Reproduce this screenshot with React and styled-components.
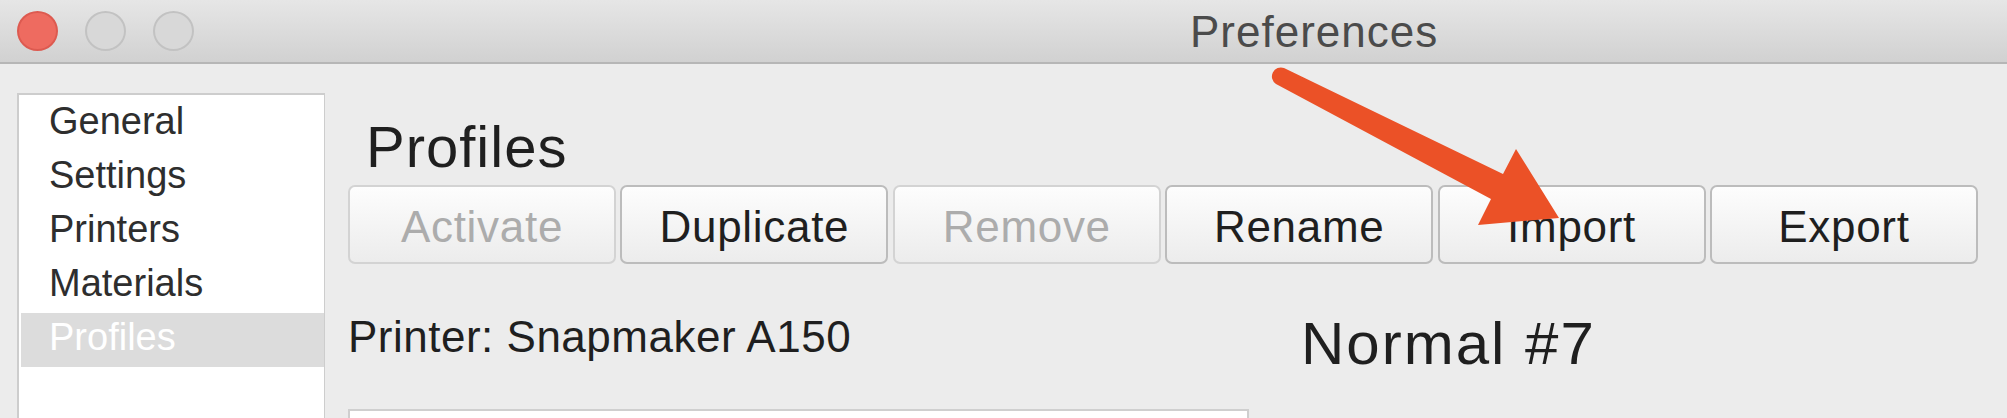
import styled, { createGlobalStyle } from 'styled-components';

const GlobalStyle = createGlobalStyle`
  html, body {
    margin: 0;
    padding: 0;
    height: 100%;
    overflow: hidden;
    background: #ececec;
    font-family: "Liberation Sans", Arial, sans-serif;
  }
`;

const Window = styled.div`
  position: relative;
  width: 2007px;
  height: 418px;
  overflow: hidden;
  background: #ececec;
`;

const TitleBar = styled.div`
  display: flex;
  align-items: center;
  height: 62px;
  padding-left: 17px;
  background: linear-gradient(#e6e6e6, #d1d1d1);
  border-bottom: 2px solid #b6b6b6;
  box-sizing: content-box;
`;

const Lights = styled.div`
  display: flex;
  gap: 27px;
`;

const Light = styled.span`
  width: 41px;
  height: 40px;
  border-radius: 50%;
  box-sizing: border-box;
  background: ${(p) => (p.$red ? '#ee6b60' : '#d8d8d8')};
  border: 2px solid ${(p) => (p.$red ? '#dd5a50' : '#c2c2c2')};
`;

const Title = styled.div`
  margin-left: 996px;
  font-size: 44px;
  line-height: 44px;
  letter-spacing: 1px;
  color: #4b4b4b;
  padding-top: 1px;
`;

const Body = styled.div`
  display: flex;
  padding: 29px 0 0 17px;
`;

const Sidebar = styled.ul`
  list-style: none;
  margin: 0;
  width: 303px;
  height: 400px;
  padding: 2px 0 0 2px;
  background: #fff;
  border: 2px solid #cdcdcd;
  border-right: 1px solid #cdcdcd;
  box-sizing: content-box;
  flex-shrink: 0;
`;

const NavItem = styled.li`
  height: 54px;
  box-sizing: border-box;
  padding: 0 0 6px 28px;
  font-size: 38px;
  line-height: 48px;
  color: ${(p) => (p.$active ? '#fff' : '#2e2e2e')};
  background: ${(p) => (p.$active ? '#dcdcdc' : 'transparent')};
`;

const Content = styled.div`
  display: flex;
  flex-direction: column;
  margin-left: 23px;
  padding-top: 22px;
`;

const Heading = styled.h1`
  margin: 0 0 6px 18px;
  font-size: 58px;
  line-height: 64px;
  letter-spacing: 1px;
  font-weight: 400;
  color: #1f1f1f;
`;

const Toolbar = styled.div`
  display: grid;
  grid-template-columns: repeat(6, 268px);
  column-gap: 4.4px;
`;

const Button = styled.button`
  height: 79px;
  box-sizing: border-box;
  padding: 4px 0 0;
  font-family: inherit;
  font-size: 44px;
  line-height: 71px;
  letter-spacing: 0.7px;
  border-radius: 7px;
  border: 2px solid ${(p) => (p.disabled ? '#d3d3d3' : '#bcbcbc')};
  background: linear-gradient(#fdfdfd, #ececec);
  color: ${(p) => (p.disabled ? '#acacac' : '#1f1f1f')};
  cursor: default;
`;

const DetailRow = styled.div`
  display: flex;
  gap: 52px;
  margin-top: 45px;
`;

const LeftColumn = styled.div`
  display: flex;
  flex-direction: column;
  width: 901px;
  padding-top: 3px;
`;

const Label = styled.div`
  font-size: 44px;
  line-height: 50px;
  letter-spacing: 0.5px;
  color: #1f1f1f;
`;

const ListBox = styled.div`
  margin-top: 47px;
  height: 200px;
  background: #fff;
  border: 2px solid #cfcfcf;
`;

const ProfileName = styled.div`
  font-size: 60px;
  line-height: 70px;
  letter-spacing: 2px;
  color: #1f1f1f;
`;

const ArrowOverlay = styled.svg`
  position: absolute;
  left: 0;
  top: 0;
  pointer-events: none;
`;

const navItems = ['General', 'Settings', 'Printers', 'Materials', 'Profiles'];

const buttons = [
  { label: 'Activate', disabled: true },
  { label: 'Duplicate' },
  { label: 'Remove', disabled: true },
  { label: 'Rename' },
  { label: 'Import' },
  { label: 'Export' },
];

const App = () => {
  return (
    <Window>
      <GlobalStyle />
      <TitleBar>
        <Lights>
          <Light $red />
          <Light />
          <Light />
        </Lights>
        <Title>Preferences</Title>
      </TitleBar>

      <Body>
        <Sidebar>
          {navItems.map((item) => (
            <NavItem key={item} $active={item === 'Profiles'}>
              {item}
            </NavItem>
          ))}
        </Sidebar>

        <Content>
          <Heading>Profiles</Heading>
          <Toolbar>
            {buttons.map((b) => (
              <Button key={b.label} disabled={b.disabled}>
                {b.label}
              </Button>
            ))}
          </Toolbar>

          <DetailRow>
            <LeftColumn>
              <Label>Printer: Snapmaker A150</Label>
              <ListBox />
            </LeftColumn>
            <ProfileName>Normal #7</ProfileName>
          </DetailRow>
        </Content>
      </Body>

      {/* annotation arrow pointing at Import */}
      <ArrowOverlay width="2007" height="418" viewBox="0 0 2007 418">
        <path
          d="M 1284 68 L 1503 174 L 1516 149 L 1559 218 L 1478 225 L 1491 199 L 1276 84 A 9 9 0 0 1 1284 68 Z"
          fill="#eb5127"
        />
      </ArrowOverlay>
    </Window>
  );
};

export default App;
